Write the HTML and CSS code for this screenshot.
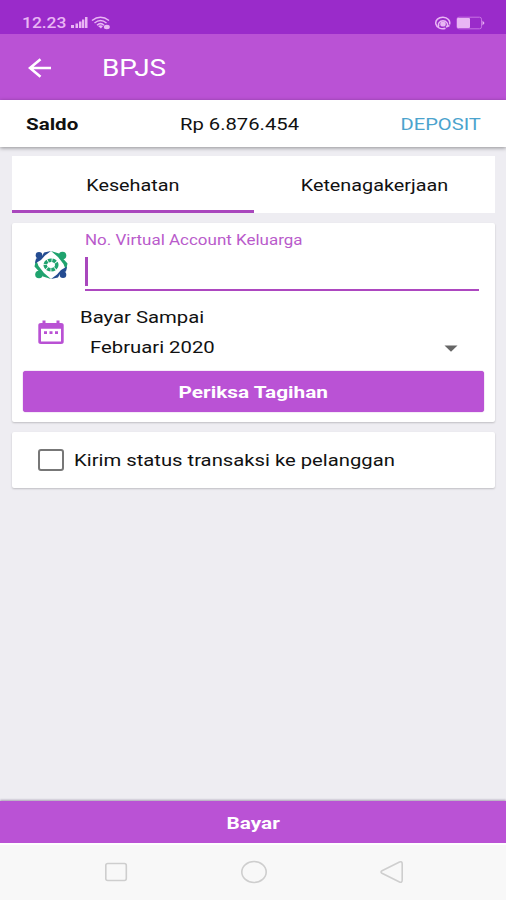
FILE: index.html
```html
<!DOCTYPE html>
<html lang="id">
<head>
<meta charset="utf-8">
<title>BPJS</title>
<link rel="stylesheet" href="styles.css">
</head>
<body>
<div class="screen">
  <div class="status">
    <span class="t time">12.23</span>
    <svg class="signal" width="17" height="12" viewBox="0 0 17 12"><path d="M0 9h3v3H0zM4.500 7.500h2.500V12H4.500zM8 5.500h2.500V12H8zM11 3.500h2.300V12H11zM14 1h2.500v11H14z"/></svg>
    <svg class="wifi" width="20" height="14" viewBox="0 0 20 14"><path d="M1 4.500Q9.500-2 18 4.500M3.500 7Q9.500 2 15.500 7M6 9.300Q9.500 6 13 9.300"/><path class="solid" d="M7 10q2.500-1.500 5 0l-2 2.500z"/><ellipse class="solid" cx="15.800" cy="11" rx="3" ry="2.200"/></svg>
    <svg class="eye" width="18" height="14" viewBox="0 0 18 14"><path d="M11.500 12.300A7 5.800 0 1 1 15.500 8.500M5 10.500a4.500 4 0 1 1 8 0"/><ellipse class="solid" cx="9" cy="8" rx="2.800" ry="2.600"/><path d="M12 11l3.500-1.500"/></svg>
    <svg class="battery" width="29" height="14" viewBox="0 0 29 14"><rect class="case" x="1" y="1.200" width="24.500" height="11.600" rx="2"/><rect class="solid" x="1" y="2" width="13" height="10" rx="1"/><path class="solid" d="M26.500 4.500l2 2.500-2 2.500z"/></svg>
  </div>
  <header class="appbar">
    <svg class="back" width="24" height="20" viewBox="0 0 24 20"><path d="M23 10H2M12.500 1.200L2 10l10.500 8.800"/></svg>
    <h1 class="t title">BPJS</h1>
  </header>
  <section class="balance">
    <b class="t saldo">Saldo</b>
    <span class="t amount">Rp 6.876.454</span>
    <a class="t deposit">DEPOSIT</a>
  </section>
  <main class="content">
    <nav class="tabs">
      <div class="tab active"><span class="t tab-a">Kesehatan</span></div>
      <div class="tab"><span class="t tab-b">Ketenagakerjaan</span></div>
    </nav>
    <section class="card form">
      <div class="account">
        <svg class="logo" width="36" height="30" viewBox="0 0 36 30">
          <g class="green"><path d="M18 1l8 2.500 3.500 4.500 5 5.500-1.500 7-2.500-6.500-5.500-7zM18 29l-8-2.500L6.500 22l-5-5.500L3 9.500 5.500 16l5.500 7z"/><circle cx="29.500" cy="5.500" r="3.800"/><circle cx="6" cy="24.500" r="3.800"/><ellipse class="ring" cx="18" cy="15" rx="5.800" ry="4.800"/></g>
          <g class="navy"><path d="M18 1l-7 1.500L8.500 7 3 8.500l-1 5L8 10l4-4.500zM18 29l7-1.500 2.500-4.500 5.500-1.500 1-5-6 3.500-4 4.500z"/><circle cx="6" cy="5.300" r="3.300"/><circle cx="30" cy="24.700" r="3.300"/></g>
        </svg>
        <div class="field">
          <label class="t hint">No. Virtual Account Keluarga</label>
          <div class="input"><i class="caret"></i></div>
        </div>
      </div>
      <div class="period">
        <svg class="calendar" width="26" height="26" viewBox="0 0 26 26"><path fill-rule="evenodd" d="M4.500.5h3V3h11V.5h3V3H23q2.700 0 2.700 2.200v16.600Q25.700 24 23 24H3Q.3 24 .3 21.800V5.200Q.3 3 3 3h1.500zM3 8.800v12.700h20V8.800zM6 11.300h3V14H6zm5.500 0h3V14h-3zm5.500 0h3V14h-3z"/></svg>
        <div class="select">
          <span class="t period-label">Bayar Sampai</span>
          <div class="value"><span class="t month">Februari 2020</span><svg width="14" height="7" viewBox="0 0 14 7"><path d="M.5.500h13L7 6.800z"/></svg></div>
        </div>
      </div>
      <button class="check"><span class="t check-text">Periksa Tagihan</span></button>
    </section>
    <section class="card notify">
      <i class="box"></i><span class="t notify-text">Kirim status transaksi ke pelanggan</span>
    </section>
  </main>
  <button class="pay"><span class="t pay-text">Bayar</span></button>
  <footer class="system">
    <svg width="24" height="24" viewBox="0 0 24 24"><rect x="1.800" y="3.500" width="20.500" height="17" rx="2"/></svg>
    <svg width="28" height="24" viewBox="0 0 28 24"><ellipse cx="14" cy="12" rx="12.200" ry="10.500"/></svg>
    <svg width="24" height="24" viewBox="0 0 24 24"><path d="M2 10.800L19.500 2q2.700-1 2.700 2v16q0 3-2.700 2L2 13.200q-2-1.200 0-2.400z"/></svg>
  </footer>
</div>
</body>
</html>
```
FILE: styles.css
```css
* { box-sizing: border-box; }
body { margin: 0; font-family: Roboto, "Liberation Sans", sans-serif; color: #111; }
svg { display: block; flex: none; }
.screen { width: 506px; height: 900px; display: flex; flex-direction: column; background: #eeedf2; overflow: hidden; }
.t { display: inline-block; white-space: nowrap; transform: scaleX(var(--sx, 1.2)); transform-origin: left center; font-size: 16.500px; line-height: 20px; }
button { border: 0; padding: 0; font-family: inherit; background: #ba52d5; color: #fff; display: flex; align-items: center; justify-content: center; }

.status { height: 34px; background: #9a2bca; display: flex; align-items: flex-start; padding: 16px 21px 0 22px; }
.status svg { fill: none; stroke: #e9b6f4; stroke-width: 1.500; }
.status .solid, .status .signal { fill: #e9b6f4; stroke: none; }
.time { --sx: 1.16; font-size: 15px; line-height: 15px; font-weight: 500; color: #e9b6f4; width: 49px; }
.wifi { margin-left: 3px; }
.eye { margin-left: auto; margin-right: 4px; }
.status .case { stroke: #c773e3; stroke-width: 1; }

.appbar { height: 66px; background: #ba52d5; color: #fff; display: flex; align-items: center; padding: 1px 0 0 28px; }
.back { fill: none; stroke: #fff; stroke-width: 2.600; }
.title { --sx: 1.16; margin: 0 0 0 50px; font-size: 24px; line-height: 30px; font-weight: 400; }

.balance { height: 47px; background: #fff; display: flex; align-items: center; padding: 2px 25px 0 26px; box-shadow: 0 1px 4px rgba(0,0,0,.4); color: #111; }
.saldo { --sx: 1.245; width: 154px; }
.amount { --sx: 1.225; }
.deposit { --sx: 1.22; margin-left: auto; transform-origin: right center; color: #4ba3cd; }

.content { flex: 1; padding: 9px 11px 0 12px; display: flex; flex-direction: column; }
.tabs { height: 57px; background: #fff; display: flex; }
.tab { flex: 1; display: flex; align-items: center; justify-content: center; border-bottom: 3px solid transparent; padding-top: 6px; }
.tab .t, button .t { transform-origin: center; }
.tab.active { border-color: #a947bd; }
.card { background: #fff; border-radius: 2px; box-shadow: 0 1px 2px rgba(0,0,0,.2); }
.form { height: 199px; margin-top: 10px; padding: 8px 11px 0; }
.account { display: flex; padding-left: 10px; }
.logo { margin: 19px 16px 0 0; }
.green { fill: #1fa36e; }
.ring { fill: none; stroke: #1fa36e; stroke-width: 3.500; stroke-dasharray: 3.500 .8; }
.navy { fill: #244c91; }
.field { flex: 1; margin-right: 5px; }
.hint { --sx: 1.212; display: block; font-size: 14px; line-height: 18px; color: #b95bcb; }
.input { height: 42px; border-bottom: 2px solid #ad48c0; padding-top: 8px; }
.caret { display: block; width: 3px; height: 29px; background: #a947bd; }
.period { height: 80px; display: flex; padding: 16px 0 0 15px; }
.calendar { margin-top: 13px; fill: #b951d4; }
.select { flex: 1; margin-left: 16px; }
.period-label { --sx: 1.23; display: block; line-height: 22px; }
.value { display: flex; align-items: center; height: 38px; padding: 0 26px 0 10px; justify-content: space-between; }
.month { --sx: 1.23; }
.value svg { fill: #666; }
.check { width: 461px; height: 41px; padding-top: 2px; border-radius: 3px; box-shadow: 0 0 1px #9d3bb5; }
.check-text, .pay-text { --sx: 1.26; font-weight: 700; }
.notify { height: 56px; margin-top: 10px; padding-left: 26px; display: flex; align-items: center; }
.notify-text { --sx: 1.227; padding-top: 2px; }
.box { width: 26px; height: 22px; border: 2.500px solid #777; border-radius: 3px; margin-right: 10px; }
.pay { width: 506px; height: 42px; flex: none; padding-top: 3px; box-shadow: 0 -1px 2px rgba(80,60,100,.45); }
.system { height: 57px; flex: none; background: #f8f8f8; border-top: 2px solid #fff; display: flex; align-items: center; justify-content: space-between; padding: 0 102px 2px 104px; }
.system svg { fill: none; stroke: #cecece; stroke-width: 1.600; }
```
